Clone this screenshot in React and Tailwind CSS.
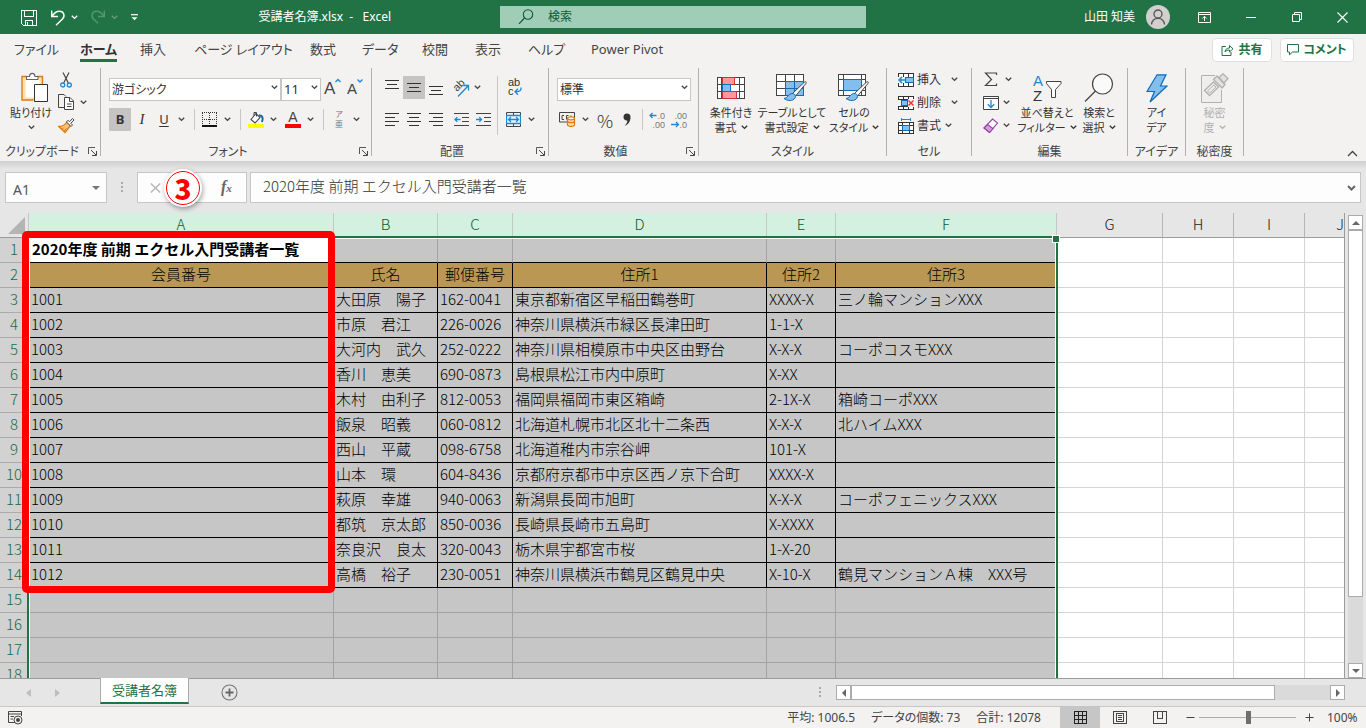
import React from "react";

const uiFont = "font-['Noto_Sans','Noto_Sans_CJK_JP',sans-serif] [font-feature-settings:'palt']";

function Chevron({ className = "text-[#444]" }) {
  return (
    <svg width="7" height="5" viewBox="0 0 7 5" className={"shrink-0 " + className} aria-hidden="true">
      <path d="M0.8 0.8 3.5 3.4 6.2 0.8" fill="none" stroke="currentColor" strokeWidth="1.4" />
    </svg>
  );
}

function Svg({ w, h, children, crisp }) {
  return (
    <svg
      width={w}
      height={h}
      viewBox={`0 0 ${w} ${h}`}
      fill="none"
      className="shrink-0"
      shapeRendering={crisp ? "crispEdges" : "auto"}
      aria-hidden="true"
    >
      {children}
    </svg>
  );
}

function Tool({ label, className, children }) {
  return (
    <button type="button" aria-label={label} className={"flex h-[23px] shrink-0 items-center justify-center " + className}>
      {children}
    </button>
  );
}

function Sep({ className }) {
  return (
    <span className={"flex h-[21px] shrink-0 justify-center " + className}>
      <span className="w-px bg-[#c8c6c4]" />
    </span>
  );
}

function Launcher({ label }) {
  return (
    <button type="button" aria-label={label} className="absolute right-0.5 bottom-0 flex h-[10px] w-[12px] items-center justify-center">
      <Svg w={9} h={9}>
        <path d="M0.5 7V0.5H7" stroke="#555" />
        <path d="M3 3 8 8M8.5 4V8.5H4" stroke="#444" />
      </Svg>
    </button>
  );
}

function Group({ name, width, launcher, children }) {
  return (
    <section aria-label={name} className={"relative flex h-[88px] shrink-0 flex-col border-r border-[#b3b1af] " + width}>
      <div className="h-20">{children}</div>
      <div className={"flex h-2 w-full items-center justify-center text-xs whitespace-nowrap text-[#444] " + (launcher ? "pr-4" : "")}>
        {name}
      </div>
      {launcher && <Launcher label={name + "の設定"} />}
    </section>
  );
}

function BigButton({ icon, lines, width, arrow, className = "text-[#333]" }) {
  return (
    <button type="button" className={"flex shrink-0 flex-col items-center text-[11px] leading-[15px] whitespace-nowrap " + width + " " + className}>
      <span className="flex h-9 items-center pt-1">{icon}</span>
      <span className="pt-px">{lines[0]}</span>
      <span className="flex items-center gap-1">
        {lines[1]}
        {arrow && <Chevron className="text-current" />}
      </span>
    </button>
  );
}

function Combo({ label, options, width, className = "" }) {
  return (
    <div className={"relative h-[23px] shrink-0 " + width}>
      <select aria-label={label} className={"h-full w-full appearance-none rounded-none border border-[#c8c6c4] bg-white pl-[2px] leading-[21px] text-[#333] outline-none " + className}>
        {options.map((o) => (
          <option key={o}>{o}</option>
        ))}
      </select>
      <span className="pointer-events-none absolute inset-y-0 right-[3px] flex items-center">
        <Chevron />
      </span>
    </div>
  );
}

/* ---------- title bar ---------- */

function TitleBar() {
  return (
    <header className="grid h-[34px] shrink-0 grid-cols-[1fr_366px_1fr] items-center bg-[#217346] text-white">
      <div className="flex items-center pl-5">
        <button type="button" aria-label="上書き保存" className="w-[18px]">
          <Svg w={17} h={17} crisp>
            <path d="M1 1H16V16H3L1 14Z" stroke="#fff" />
            <path d="M4 1V7H13V1M5 16V11H12V16M7.500 13V16" stroke="#fff" />
          </Svg>
        </button>
        <button type="button" aria-label="元に戻す" className="ml-3 flex items-center gap-1">
          <Svg w={17} h={17}>
            <path d="M1.700 1.500V7.500H8M2 7.200C4 4 6.500 2.200 9.500 2.200C13.800 2.200 15.500 7 12.500 10L6 16.300" stroke="#fff" strokeWidth="1.400" />
          </Svg>
          <Chevron className="text-white" />
        </button>
        <button type="button" aria-label="やり直し" className="ml-3 flex items-center gap-1 opacity-30">
          <Svg w={17} h={17}>
            <path d="M14.300 1.500V7.500H8M14 7.200C12 4 9.500 2.200 6.500 2.200C2.200 2.200 0.500 7 3.500 10L8 14.300" stroke="#cfe8da" strokeWidth="1.400" />
          </Svg>
          <Chevron className="text-white" />
        </button>
        <button type="button" aria-label="クイック アクセスのカスタマイズ" className="ml-3">
          <Svg w={9} h={7}>
            <path d="M1 0.700H8" stroke="#fff" strokeWidth="1.200" />
            <path d="M1.500 3.300H7.500L4.500 6.300Z" fill="#fff" />
          </Svg>
        </button>
        <h1 className="mr-[109px] ml-auto text-xs whitespace-pre">受講者名簿.xlsx&nbsp; -&nbsp;&nbsp; Excel</h1>
      </div>
      <label className="flex h-[22px] items-center bg-[#a0cdb5] pl-[18px]">
        <Svg w={16} h={16}>
          <circle cx="10" cy="5.500" r="4.700" stroke="#0f5a33" strokeWidth="1.100" />
          <path d="M6.500 9 1 14.800" stroke="#0f5a33" strokeWidth="1.200" />
        </Svg>
        <input aria-label="検索" placeholder="検索" className="ml-3.5 min-w-0 flex-1 bg-transparent text-xs text-[#0f5a33] outline-none placeholder:text-[#0f5a33]" />
      </label>
      <div className="flex items-center justify-end">
        <span className="mr-[11px] text-xs whitespace-nowrap">山田 知美</span>
        <button type="button" aria-label="アカウント" className="mr-[23px] flex size-6 items-center justify-center rounded-full bg-[#d2d0ce]">
          <Svg w={16} h={16}>
            <circle cx="8" cy="5" r="4" stroke="#555" strokeWidth="1.300" />
            <path d="M1.500 15.500C2 11 5 9.300 8 9.300S14 11 14.500 15.500" stroke="#555" strokeWidth="1.300" />
          </Svg>
        </button>
        <button type="button" aria-label="リボンの表示オプション" className="flex w-[23px] justify-center">
          <Svg w={13} h={11}>
            <path d="M0.500 0.500H12.500V10.500H0.500ZM0.500 2.500H12.500" stroke="#fff" />
            <path d="M6.500 9V4.500M4.300 6.500 6.500 4.300 8.700 6.500" stroke="#fff" />
          </Svg>
        </button>
        <button type="button" aria-label="最小化" className="flex w-[70px] justify-center">
          <Svg w={10} h={10}><path d="M0 5.500H10" stroke="#fff" /></Svg>
        </button>
        <button type="button" aria-label="元のサイズに戻す" className="flex w-[22px] justify-center">
          <Svg w={10} h={10}>
            <path d="M0.500 2.500H7.500V9.500H0.500ZM2.500 2.500V0.500H9.500V7.500H7.500" stroke="#fff" />
          </Svg>
        </button>
        <button type="button" aria-label="閉じる" className="flex w-[58px] justify-end pr-[18px]">
          <Svg w={11} h={11}><path d="M0.500 0.500 10.500 10.500M10.500 0.500 0.500 10.500" stroke="#fff" strokeWidth="1.100" /></Svg>
        </button>
      </div>
    </header>
  );
}

/* ---------- ribbon tabs ---------- */

const tabs = [
  ["ファイル", "w-[66px]"],
  ["ホーム", "w-[60px]"],
  ["挿入", "w-[54px]"],
  ["ページ レイアウト", "w-[116px]"],
  ["数式", "w-[52px]"],
  ["データ", "w-[60px]"],
  ["校閲", "w-[53px]"],
  ["表示", "w-[53px]"],
  ["ヘルプ", "w-[63px]"],
  ["Power Pivot", "w-[90px]"],
];

function RibbonTabs() {
  return (
    <nav className="flex h-8 shrink-0 items-center pl-3.5 text-[13px] text-[#444]">
      {tabs.map(([name, width]) => (
        <button key={name} type="button" className={"shrink-0 pt-0.5 text-left whitespace-nowrap " + width}>
          {name === "ホーム" ? (
            <span className="inline-block border-b-[3px] border-[#217346] font-bold text-[#333]">{name}</span>
          ) : (
            <span className="inline-block border-b-[3px] border-transparent">{name}</span>
          )}
        </button>
      ))}
      <button type="button" className="ml-auto flex h-6 w-[60px] shrink-0 items-center justify-center gap-1 rounded-sm border border-[#e1dfdd] bg-white text-xs font-bold text-[#217346]">
        <Svg w={13} h={12}>
          <path d="M5 2.500H1V11.500H10V8" stroke="#217346" />
          <path d="M4 8C4.500 5 6 4 8.500 4V1.500L12 4.800 8.500 8V6C6.500 6 5 6.500 4 8Z" stroke="#217346" />
        </Svg>
        共有
      </button>
      <button type="button" className="mr-3 ml-2 flex h-6 w-[74px] shrink-0 items-center justify-center gap-1 rounded-sm border border-[#e1dfdd] bg-white text-xs font-bold whitespace-nowrap text-[#217346]">
        <Svg w={12} h={12}>
          <path d="M0.500 0.500H11.500V8H5.500L2.500 10.800V8H0.500Z" stroke="#217346" />
        </Svg>
        コメント
      </button>
    </nav>
  );
}

/* ---------- ribbon icons ---------- */

const PasteIcon = () => (
  <Svg w={28} h={30}>
    <path d="M3 5.500H20V27H3Z" fill="#fff" stroke="#fbe0a8" strokeWidth="3" />
    <path d="M12.500 28H1V4.500H6M16 4.500H21.500V12" stroke="#e07b12" strokeWidth="1.400" />
    <path d="M5.500 7.500V4.500H8.500C8.500 0.300 14 0.300 14 4.500H17V7.500Z" fill="#fff" stroke="#666" strokeWidth="1.100" />
    <path d="M13.500 12.500H26.500V29.500H13.500Z" fill="#fff" stroke="#333" />
  </Svg>
);
const CutIcon = () => (
  <Svg w={12} h={16}>
    <path d="M3 0.500 8.300 11M9 0.500 3.700 11" stroke="#444" strokeWidth="1.200" />
    <circle cx="2.700" cy="13" r="2" stroke="#1e88d2" strokeWidth="1.300" />
    <circle cx="9.300" cy="13" r="2" stroke="#1e88d2" strokeWidth="1.300" />
  </Svg>
);
const CopyIcon = () => (
  <Svg w={17} h={17}>
    <path d="M6 13.500H0.500V0.500H6L8 2.500" stroke="#444" />
    <path d="M6.500 3.500H12L15.500 7V15.500H6.500Z" fill="#fff" stroke="#444" />
    <path d="M11.500 3.500V7.500H15.500M9 10H13.500M9 12.500H13.500" stroke="#444" />
  </Svg>
);
const BrushIcon = () => (
  <Svg w={17} h={16}>
    <path d="M9 4 12.500 7.500 7 14.500 0.800 8.500C4 8.500 7 7 9 4Z" fill="#f7c27a" stroke="#e07b12" strokeWidth="1.300" />
    <path d="M4 11.500 6 9.500M6 13 8.500 10.500" stroke="#e07b12" />
    <path d="M8.500 4 13 8.500 14.500 7 12.800 5.300 16 2 14.500 0.500 11.500 3.800 10 2.300Z" fill="#fff" stroke="#444" />
  </Svg>
);
const GrowFontIcon = () => (
  <Svg w={18} h={19}>
    <text x="0" y="16" fontSize="17" fill="#444" fontFamily="Liberation Sans">A</text>
    <path d="M11.500 4 14 1.500 16.500 4" stroke="#1e88d2" strokeWidth="1.300" />
  </Svg>
);
const ShrinkFontIcon = () => (
  <Svg w={17} h={19}>
    <text x="0" y="16" fontSize="15" fill="#444" fontFamily="Liberation Sans">A</text>
    <path d="M10.500 1.500 13 4 15.500 1.500" stroke="#1e88d2" strokeWidth="1.300" />
  </Svg>
);
const Lines = ({ rows, h = 13 }) => (
  <Svg w={14} h={h} crisp>
    {rows.map(([x1, x2, y]) => (
      <path key={y} d={`M${x1} ${y + 0.5}H${x2}`} stroke="#333" />
    ))}
  </Svg>
);
const Indent = ({ out }) => (
  <Svg w={15} h={13}>
    <path d="M0 0.500H15M8 4.500H15M8 8.500H15M0 12.500H15" stroke="#444" shapeRendering="crispEdges" />
    {out ? (
      <path d="M6.500 6.500H1M3.200 4.300 1 6.500 3.200 8.700" stroke="#1e88d2" strokeWidth="1.300" />
    ) : (
      <path d="M0 6.500H5.500M3.300 4.300 5.500 6.500 3.300 8.700" stroke="#1e88d2" strokeWidth="1.300" />
    )}
  </Svg>
);
const OrientIcon = () => (
  <Svg w={20} h={20}>
    <text x="0" y="0" fontSize="11" fill="#444" fontFamily="Liberation Sans" transform="translate(7 14) rotate(-45)">ab</text>
    <path d="M8 18.500 18 8M13.500 7.500H18.500V12.500" stroke="#1e88d2" strokeWidth="1.300" />
  </Svg>
);
const WrapIcon = () => (
  <Svg w={16} h={22}>
    <text x="1" y="9" fontSize="11" fill="#333" fontFamily="Liberation Sans">ab</text>
    <text x="1" y="18" fontSize="11" fill="#333" fontFamily="Liberation Sans">c</text>
    <path d="M14 10.500V12C14 14 12.500 14.800 8 14.800M11 11.800 8 14.800 11 17.800" stroke="#1e88d2" strokeWidth="1.300" />
  </Svg>
);
const MergeIcon = () => (
  <Svg w={15} h={15}>
    <path d="M0.500 0.500H14.500V14.500H0.500ZM7.500 0.500V3M7.500 12V14.500" stroke="#444" />
    <path d="M0.500 3.500H14.500V11.500H0.500Z" fill="#eef6fd" stroke="#1e88d2" strokeWidth="1.300" />
    <path d="M2.500 7.500H12.500M5 5 2.500 7.500 5 10M10 5 12.500 7.500 10 10" stroke="#1e88d2" strokeWidth="1.300" />
  </Svg>
);
const BorderIcon = () => (
  <Svg w={15} h={15} crisp>
    <path d="M0 0.500H15M0.500 1V14M14.500 1V14M7.500 1V14M0 7.500H15" stroke="#333" strokeDasharray="1 1" />
    <path d="M0 14H15" stroke="#111" strokeWidth="2" />
  </Svg>
);
const FillIcon = () => (
  <Svg w={17} h={18}>
    <path d="M3 8.500 8 2.500 12 6.500 7 12Z" fill="#fff" stroke="#444" strokeWidth="1.100" />
    <path d="M6 5V1.500H8.500V5.500" stroke="#444" />
    <path d="M11 4.500C14.500 4 15.500 7 14 11" stroke="#1565a8" strokeWidth="2" />
    <path d="M0 13H16V17H0Z" fill="#ff0" />
  </Svg>
);
const FontColorIcon = () => (
  <Svg w={16} h={18}>
    <text x="8" y="11" fontSize="14" textAnchor="middle" fill="#444" fontFamily="Liberation Sans">A</text>
    <path d="M0 13H16V17H0Z" fill="#f00" />
  </Svg>
);
const PhoneticIcon = () => (
  <Svg w={12} h={23}>
    <text x="6" y="9" fontSize="8" textAnchor="middle" fill="#777" fontFamily="Noto Sans CJK JP">ア</text>
    <text x="6" y="19" fontSize="8" textAnchor="middle" fill="#777" fontFamily="Noto Sans CJK JP">亜</text>
  </Svg>
);
const CurrencyIcon = () => (
  <Svg w={17} h={15}>
    <path d="M0.500 0.500H15.500V10H0.500Z" stroke="#444" />
    <path d="M5 3.500H3V7.500H5M9.500 3.500H7.500V7.500M12 3.500V5" stroke="#444" />
    <path d="M8.500 6.500V12.800C8.500 14.800 15.500 14.800 15.500 12.800V6.500Z" fill="#fbe0a8" stroke="#e07b12" strokeWidth="1.200" />
    <ellipse cx="12" cy="6.300" rx="3.500" ry="1.500" fill="#fff" stroke="#e07b12" strokeWidth="1.200" />
    <path d="M8.500 9.500C9 11 15 11 15.500 9.500" stroke="#e07b12" strokeWidth="1.200" />
  </Svg>
);
const DecimalIcon = ({ more }) => (
  <Svg w={16} h={20}>
    <text x="16" y="9" fontSize="9" textAnchor="end" fill="#777" fontFamily="Liberation Sans">{more ? ".0" : ".00"}</text>
    <text x="16" y="18" fontSize="9" textAnchor="end" fill="#777" fontFamily="Liberation Sans">{more ? ".00" : ".0"}</text>
    {more ? (
      <path d="M7.500 5.500H1M3.500 3 1 5.500 3.500 8" stroke="#1e88d2" strokeWidth="1.300" />
    ) : (
      <path d="M0 14.500H7.500M5 12 7.500 14.500 5 17" stroke="#1e88d2" strokeWidth="1.300" />
    )}
  </Svg>
);
const GridBase = () => (
  <path d="M0.500 0.500H27.500V21.500H0.500ZM0.500 7.500H27.500M0.500 14.500H27.500M9.500 0.500V21.500M18.500 0.500V21.500" fill="#fff" stroke="#444" shapeRendering="crispEdges" />
);
const PaintBrush = () => (
  <>
    <path d="M28 8.500C30 7 31 8 29.500 10L19.500 22 16.500 19.500Z" fill="#fff" stroke="#444" />
    <path d="M16 19.500C18.500 19.500 20.500 21.500 19 24C17 27 12 27.500 8 24.500C12 24.500 11.500 20 16 19.500Z" fill="#83beec" stroke="#0f6cbd" />
  </>
);
const CondIcon = () => (
  <Svg w={28} h={28}>
    <g shapeRendering="crispEdges">
      <path d="M0.500 3.500H27.500V24.500H0.500ZM0.500 10.500H27.500M0.500 17.500H27.500M4.500 3.500V24.500M22.500 3.500V24.500" fill="#fff" stroke="#444" />
      <path d="M5.500 3.500H17.500V10.500H5.500ZM5.500 17.500H19.500V24.500H5.500Z" fill="#f99" stroke="#d13438" />
      <path d="M5.500 10.500H13.500V17.500H5.500Z" fill="#83beec" stroke="#0f6cbd" />
    </g>
  </Svg>
);
const TableStyleIcon = () => (
  <Svg w={32} h={28}>
    <GridBase />
    <path d="M9.500 7.500H27.500V21.500H9.500ZM18.500 7.500V21.500M9.500 14.500H27.500" fill="#83beec" stroke="#0f6cbd" shapeRendering="crispEdges" />
    <PaintBrush />
  </Svg>
);
const CellStyleIcon = () => (
  <Svg w={32} h={28}>
    <path d="M0.500 0.500H27.500V21.500H0.500ZM0.500 5.500H27.500M0.500 16.500H27.500M5.500 0.500V21.500M23.500 0.500V21.500" fill="#fff" stroke="#444" shapeRendering="crispEdges" />
    <path d="M5.500 5.500H23.500V16.500H5.500Z" fill="#83beec" stroke="#0f6cbd" shapeRendering="crispEdges" />
    <PaintBrush />
  </Svg>
);
const InsertIcon = () => (
  <Svg w={16} h={14}>
    <path d="M0.500 0.500H15.500V13.500H0.500ZM5.500 0.500V13.500M10.500 0.500V13.500M0.500 4.500H15.500M0.500 9.500H15.500" fill="#fff" stroke="#333" shapeRendering="crispEdges" />
    <path d="M7.500 4.500H15.500V9.500H7.500Z" fill="#83beec" stroke="#0f6cbd" shapeRendering="crispEdges" />
    <path d="M0 4H7V10H0Z" fill="#f3f2f1" />
    <path d="M8 7H1M4 4 1 7 4 10" stroke="#1e88d2" strokeWidth="1.500" />
  </Svg>
);
const DeleteIcon = () => (
  <Svg w={16} h={14}>
    <path d="M0.500 0.500H15.500V3.500H0.500ZM0.500 10.500H15.500V13.500H0.500ZM5.500 0.500V3.500M10.500 0.500V3.500M5.500 10.500V13.500M10.500 10.500V13.500" fill="#fff" stroke="#333" shapeRendering="crispEdges" />
    <path d="M0.500 3.500H3.500V10.500" stroke="#333" shapeRendering="crispEdges" />
    <path d="M3.500 4.500H9.500V9.500H3.500Z" fill="#83beec" stroke="#0f6cbd" shapeRendering="crispEdges" />
    <path d="M10 3H16V11H10Z" fill="#f3f2f1" />
    <path d="M10.500 4.500 15.500 9.500M15.500 4.500 10.500 9.500" stroke="#e8383d" strokeWidth="1.500" />
  </Svg>
);
const FormatIcon = () => (
  <Svg w={16} h={16}>
    <path d="M0.500 4.500H15.500V15.500H0.500ZM4.500 4.500V15.500M11.500 4.500V15.500M0.500 7.500H15.500M0.500 12.500H15.500" fill="#fff" stroke="#333" shapeRendering="crispEdges" />
    <path d="M4.500 7.500H11.500V12.500H4.500Z" fill="#83beec" stroke="#0f6cbd" shapeRendering="crispEdges" />
    <path d="M3 1.500H13M3.500 0V3M12.500 0V3" stroke="#1e88d2" shapeRendering="crispEdges" />
  </Svg>
);
const SigmaIcon = () => (
  <Svg w={14} h={15}>
    <path d="M12.500 3V1H1.500L7.500 7.500 1.500 13.500H12.500V11.500" stroke="#444" strokeWidth="1.200" />
  </Svg>
);
const DownFillIcon = () => (
  <Svg w={16} h={14}>
    <path d="M0.500 0.500H15.500V13.500H0.500ZM0.500 2.500H15.500" fill="#fff" stroke="#444" />
    <path d="M8 4V11.500M4.800 8.300 8 11.500 11.200 8.300" stroke="#1e88d2" strokeWidth="1.300" />
  </Svg>
);
const EraserIcon = () => (
  <Svg w={16} h={16}>
    <path d="M9.500 1 14.500 5 6.500 14.500 1 10Z" fill="#fff" stroke="#9b3fa5" strokeWidth="1.100" />
    <path d="M4.500 6.500 10 10.500 6.500 14.500 1 10Z" fill="#d59ddb" stroke="#9b3fa5" strokeWidth="1.100" />
  </Svg>
);
const SortIcon = () => (
  <Svg w={29} h={32}>
    <text x="0" y="14" fontSize="15" fill="#1e88d2" fontFamily="Liberation Sans">A</text>
    <text x="0" y="29" fontSize="15" fill="#333" fontFamily="Liberation Sans">Z</text>
    <path d="M13.500 9.500H28V11.500L22.500 17.500V25.500H18.500V17.500L13.500 11.500Z" fill="#fff" stroke="#444" />
  </Svg>
);
const FindIcon = () => (
  <Svg w={30} h={30}>
    <circle cx="18.500" cy="11" r="10" fill="#fafafa" stroke="#444" strokeWidth="1.200" />
    <path d="M11.500 18 1 28.500" stroke="#444" strokeWidth="1.300" />
  </Svg>
);
const BoltIcon = () => (
  <Svg w={22} h={29}>
    <path d="M11 0.800H20L14.500 12H21L4 28 8.500 17.500H1Z" fill="#83beec" stroke="#0f6cbd" strokeWidth="1.200" />
  </Svg>
);
const SensitivityIcon = () => (
  <Svg w={28} h={30}>
    <path d="M14 2.500H0.500V29.500H20.500V17" fill="#efeeed" stroke="#b1b1b1" />
    <path d="M3.500 17.500 12.500 9 17.500 14 8.500 22.500Z" fill="#efeeed" stroke="#b1b1b1" strokeWidth="1.300" />
    <path d="M6.500 18 13 12 15 14 8.500 20Z" stroke="#b1b1b1" />
    <path d="M12.500 6.500 16 3 24 11.500 21 15Z" fill="#e1e1e1" stroke="#b1b1b1" strokeWidth="1.300" />
    <path d="M18 4.500 22 0.800 27 5.500 23 10Z" fill="#e1e1e1" stroke="#b1b1b1" strokeWidth="1.300" />
  </Svg>
);

/* ---------- ribbon ---------- */

function CellRow({ icon, text, gap }) {
  return (
    <button type="button" className="flex h-[23px] items-center text-xs text-[#333]">
      <span className="flex w-[19px] items-center">{icon}</span>
      <span>{text}</span>
      <span className={gap}>
        <Chevron />
      </span>
    </button>
  );
}

function EditRow({ icon, label, gap }) {
  return (
    <button type="button" aria-label={label} className="flex h-[23px] items-center">
      <span className="flex w-4 items-center justify-center">{icon}</span>
      <span className={gap}>
        <Chevron />
      </span>
    </button>
  );
}

function Ribbon() {
  return (
    <div className="flex h-[95px] shrink-0 pt-0.5 text-[#333]">
      <Group name="クリップボード" width="w-[101px]" launcher>
        <div className="flex pl-2">
          <button type="button" className="flex w-[46px] flex-col items-center text-[11px] whitespace-nowrap">
            <span className="flex h-[37px] items-center pl-2">
              <PasteIcon />
            </span>
            <span className="leading-[15px]">貼り付け</span>
            <span className="flex h-[14px] items-center">
              <Chevron />
            </span>
          </button>
          <div className="ml-[3px] flex flex-col">
            <Tool label="切り取り" className="w-[17px]"><CutIcon /></Tool>
            <Tool label="コピー" className="w-[30px] gap-[5px]">
              <CopyIcon />
              <Chevron />
            </Tool>
            <Tool label="書式のコピー/貼り付け" className="w-[18px]"><BrushIcon /></Tool>
          </div>
        </div>
      </Group>

      <Group name="フォント" width="w-[271px]" launcher>
        <div className="flex flex-col gap-[9px] pt-2 pl-2">
          <div className="flex items-center">
            <Combo label="フォント" options={["游ゴシック"]} width="w-[172px]" className="text-xs" />
            <Combo label="フォント サイズ" options={["11"]} width="w-[40px]" className="text-[13px]" />
            <Tool label="フォント サイズの拡大" className="ml-[3px] w-[18px]"><GrowFontIcon /></Tool>
            <Tool label="フォント サイズの縮小" className="ml-1 w-[18px]"><ShrinkFontIcon /></Tool>
          </div>
          <div className="flex items-center">
            <Tool label="太字" className="w-[22px] bg-[#c6c4c2] text-[13px] font-bold">B</Tool>
            <Tool label="斜体" className="w-[22px] font-['Liberation_Serif',serif] text-[15px] italic">I</Tool>
            <Tool label="下線" className="w-[22px] text-[13px] underline underline-offset-2">U</Tool>
            <Tool label="下線の種類" className="w-[12px]"><Chevron /></Tool>
            <Sep className="w-[14px]" />
            <Tool label="罫線" className="w-4"><BorderIcon /></Tool>
            <Tool label="罫線の種類" className="w-5"><Chevron /></Tool>
            <Sep className="w-1.5" />
            <Tool label="塗りつぶしの色" className="w-[26px]"><FillIcon /></Tool>
            <Tool label="塗りつぶしの色の選択" className="w-2"><Chevron /></Tool>
            <Tool label="フォントの色" className="ml-1 w-6"><FontColorIcon /></Tool>
            <Tool label="フォントの色の選択" className="w-2.5"><Chevron /></Tool>
            <Sep className="w-4" />
            <Tool label="ふりがなの表示" className="w-4"><PhoneticIcon /></Tool>
            <Tool label="ふりがなの設定" className="w-[18px]"><Chevron /></Tool>
          </div>
        </div>
      </Group>

      <Group name="配置" width="w-[177px]" launcher>
        <div className="flex pt-2 pl-[9px]">
          <div className="flex flex-col gap-[9px]">
            <div className="flex">
              <Tool label="上揃え" className="w-[22px] pb-1.5"><Lines h={9} rows={[[0, 14, 0], [2, 12, 4], [0, 14, 8]]} /></Tool>
              <Tool label="上下中央揃え" className="w-[22px] bg-[#c6c4c2]"><Lines h={9} rows={[[0, 14, 0], [2, 12, 4], [0, 14, 8]]} /></Tool>
              <Tool label="下揃え" className="w-[22px] pt-1.5"><Lines h={9} rows={[[0, 14, 0], [2, 12, 4], [0, 14, 8]]} /></Tool>
              <Tool label="方向" className="w-9 gap-1">
                <OrientIcon />
                <Chevron />
              </Tool>
            </div>
            <div className="flex">
              <Tool label="左揃え" className="w-[22px]"><Lines rows={[[0, 14, 0], [0, 10, 4], [0, 14, 8], [0, 10, 12]]} /></Tool>
              <Tool label="中央揃え" className="w-[22px]"><Lines rows={[[0, 14, 0], [2, 12, 4], [0, 14, 8], [2, 12, 12]]} /></Tool>
              <Tool label="右揃え" className="w-[22px]"><Lines rows={[[0, 14, 0], [4, 14, 4], [0, 14, 8], [4, 14, 12]]} /></Tool>
              <Tool label="インデントを減らす" className="ml-[3px] w-[22px]"><Indent out /></Tool>
              <Tool label="インデントを増やす" className="w-[22px]"><Indent /></Tool>
            </div>
          </div>
          <span className="ml-[3px] h-[59px] w-px bg-[#c8c6c4]" />
          <div className="flex flex-col gap-[9px] pl-[7px]">
            <Tool label="折り返して全体を表示する" className="w-5"><WrapIcon /></Tool>
            <Tool label="セルを結合して中央揃え" className="w-[31px] gap-[7px]">
              <MergeIcon />
              <Chevron />
            </Tool>
          </div>
        </div>
      </Group>

      <Group name="数値" width="w-[150px]" launcher>
        <div className="flex flex-col gap-[9px] pt-2 pl-2">
          <Combo label="表示形式" options={["標準"]} width="w-[134px]" className="text-xs" />
          <div className="flex items-center">
            <Tool label="通貨表示形式" className="w-[34px] gap-1.5">
              <CurrencyIcon />
              <Chevron />
            </Tool>
            <Tool label="パーセント スタイル" className="ml-[3px] w-[22px] font-['Noto_Sans_CJK_JP',sans-serif] text-lg font-light">%</Tool>
            <Tool label="桁区切りスタイル" className="w-[22px]">
              <Svg w={8} h={13}>
                <path d="M0.500 4A3.500 3.500 0 0 1 7.500 4C7.500 8 5.500 11.500 1.500 12.800C3.500 11 4.300 9.500 4.300 7.500C2 7.800 0.500 6.300 0.500 4Z" fill="#333" />
              </Svg>
            </Tool>
            <Sep className="w-2" />
            <Tool label="小数点以下の表示桁数を増やす" className="w-[22px]"><DecimalIcon more /></Tool>
            <Tool label="小数点以下の表示桁数を減らす" className="w-[22px]"><DecimalIcon /></Tool>
          </div>
        </div>
      </Group>

      <Group name="スタイル" width="w-[188px]">
        <div className="flex pl-[7px]">
          <BigButton icon={<CondIcon />} lines={["条件付き", "書式"]} width="w-[50px]" arrow />
          <BigButton icon={<TableStyleIcon />} lines={["テーブルとして", "書式設定"]} width="w-[72px]" arrow />
          <BigButton icon={<CellStyleIcon />} lines={["セルの", "スタイル"]} width="w-[52px]" arrow />
        </div>
      </Group>

      <Group name="セル" width="w-[85px]">
        <div className="flex flex-col pl-[11px]">
          <CellRow icon={<InsertIcon />} text="挿入" gap="pl-[10px]" />
          <CellRow icon={<DeleteIcon />} text="削除" gap="pl-[10px]" />
          <CellRow icon={<FormatIcon />} text="書式" gap="pl-1" />
        </div>
      </Group>

      <Group name="編集" width="w-[156px]">
        <div className="flex pl-[11px]">
          <div className="flex w-[30px] flex-col">
            <EditRow icon={<SigmaIcon />} label="オート SUM" gap="pl-1.5" />
            <EditRow icon={<DownFillIcon />} label="フィル" gap="pl-1" />
            <EditRow icon={<EraserIcon />} label="クリア" gap="pl-1" />
          </div>
          <BigButton icon={<SortIcon />} lines={["並べ替えと", "フィルター"]} width="ml-1 w-[60px]" arrow />
          <BigButton icon={<FindIcon />} lines={["検索と", "選択"]} width="w-[44px]" arrow />
        </div>
      </Group>

      <Group name="アイデア" width="w-[58px]">
        <BigButton icon={<BoltIcon />} lines={["アイ", "デア"]} width="w-full" />
      </Group>

      <Group name="秘密度" width="w-[58px]">
        <BigButton icon={<SensitivityIcon />} lines={["秘密", "度"]} width="w-full" arrow className="text-[#b1b1b1]" />
      </Group>

      <button type="button" aria-label="リボンを折りたたむ" className="mr-2 ml-auto flex items-end pb-1">
        <Svg w={11} h={7}>
          <path d="M1 6 5.500 1.500 10 6" stroke="#444" strokeWidth="1.300" />
        </Svg>
      </button>
    </div>
  );
}

/* ---------- formula bar ---------- */

function FormulaBar() {
  return (
    <div className="flex h-[52px] shrink-0 bg-[linear-gradient(#cfcfcf,#e6e6e6_8px)] pt-[11px] pr-[5px] pb-2.5 pl-[5px]">
      <div className="flex w-[102px] shrink-0 items-center border border-[#c6c6c6] bg-[#fdfdfd] pr-1.5 pl-[7px]">
        <input aria-label="名前ボックス" defaultValue="A1" className="min-w-0 flex-1 bg-transparent pt-1 text-sm text-[#555] outline-none" />
        <Svg w={8} h={4}><path d="M0 0H8L4 4Z" fill="#777" /></Svg>
      </div>
      <div className="flex w-[30px] shrink-0 items-center justify-center">
        <Svg w={2} h={11} crisp><path d="M1 0V2M1 4V6M1 8V10" stroke="#aaa" strokeWidth="2" /></Svg>
      </div>
      <div className="relative flex w-[110px] shrink-0 items-center border border-[#c6c6c6] bg-[#fdfdfd]">
        <button type="button" aria-label="キャンセル" className="flex w-9 justify-center">
          <Svg w={11} h={10}><path d="M0.800 0.500 10.200 9.500M10.200 0.500 0.800 9.500" stroke="#bbb" strokeWidth="1.600" /></Svg>
        </button>
        <button type="button" aria-label="入力" className="flex w-[22px] justify-center">
          <Svg w={11} h={10}><path d="M0.800 5 4 8.500 10.200 1" stroke="#bbb" strokeWidth="1.800" /></Svg>
        </button>
        <button type="button" aria-label="関数の挿入" className="ml-3 w-10 pb-0.5 text-center font-['Liberation_Serif',serif] text-base font-bold text-[#666] italic">
          f<span className="text-[11px]">x</span>
        </button>
        <div className="absolute -top-1 left-[26px] z-20 flex size-[38px] items-center justify-center rounded-full bg-white shadow-[1px_2px_5px_rgba(0,0,0,0.35)]">
          <div className="flex size-[34px] items-center justify-center rounded-full border border-[#f00]">
            <span className="font-['Noto_Sans_CJK_JP',sans-serif] text-[28px] leading-6 font-black text-[#f00]">3</span>
          </div>
        </div>
      </div>
      <div className="ml-[3px] flex min-w-0 flex-1 items-center border border-[#c6c6c6] bg-[#fdfdfd] pr-1 pl-3">
        <input
          aria-label="数式バー"
          defaultValue="2020年度 前期 エクセル入門受講者一覧"
          className="h-[25px] min-w-0 flex-1 self-start bg-transparent font-['Noto_Sans_CJK_JP',sans-serif] text-[15px] font-light text-[#333] outline-none [font-feature-settings:normal]"
        />
        <Svg w={9} h={6}><path d="M1 1 4.500 4.500 8 1" stroke="#666" strokeWidth="2" /></Svg>
      </div>
    </div>
  );
}

/* ---------- worksheet ---------- */

const columns = [
  ["A", "w-[305px]"],
  ["B", "w-[104px]"],
  ["C", "w-[75px]"],
  ["D", "w-[254px]"],
  ["E", "w-[69px]"],
  ["F", "w-[221px]"],
  ["G", "w-[106px]"],
  ["H", "w-[71px]"],
  ["I", "w-[71px]"],
  ["J", "w-[71px]"],
];

const data = [
  ["2020年度 前期 エクセル入門受講者一覧", "", "", "", "", ""],
  ["会員番号", "氏名", "郵便番号", "住所1", "住所2", "住所3"],
  ["1001", "大田原　陽子", "162-0041", "東京都新宿区早稲田鶴巻町", "XXXX-X", "三ノ輪マンションXXX"],
  ["1002", "市原　君江", "226-0026", "神奈川県横浜市緑区長津田町", "1-1-X", ""],
  ["1003", "大河内　武久", "252-0222", "神奈川県相模原市中央区由野台", "X-X-X", "コーポコスモXXX"],
  ["1004", "香川　恵美", "690-0873", "島根県松江市内中原町", "X-XX", ""],
  ["1005", "木村　由利子", "812-0053", "福岡県福岡市東区箱崎", "2-1X-X", "箱崎コーポXXX"],
  ["1006", "飯泉　昭義", "060-0812", "北海道札幌市北区北十二条西", "X-X-X", "北ハイムXXX"],
  ["1007", "西山　平蔵", "098-6758", "北海道稚内市宗谷岬", "101-X", ""],
  ["1008", "山本　環", "604-8436", "京都府京都市中京区西ノ京下合町", "XXXX-X", ""],
  ["1009", "萩原　幸雄", "940-0063", "新潟県長岡市旭町", "X-X-X", "コーポフェニックスXXX"],
  ["1010", "都筑　京太郎", "850-0036", "長崎県長崎市五島町", "X-XXXX", ""],
  ["1011", "奈良沢　良太", "320-0043", "栃木県宇都宮市桜", "1-X-20", ""],
  ["1012", "高橋　裕子", "230-0051", "神奈川県横浜市鶴見区鶴見中央", "X-10-X", "鶴見マンションＡ棟　XXX号"],
  [], [], [], [],
];

function cellClass(row, col) {
  const base = "h-[25px] overflow-visible border-r border-b p-0 align-top leading-[21px] whitespace-pre ";
  if (col > 5) return base + "border-[#d4d4d4] bg-white";
  if (row === 0) {
    return base + "border-r-[#a3a3a3] border-b-black pl-[3px] " + (col === 0 ? "bg-white font-bold" : "bg-[#c6c6c6]");
  }
  if (row === 1) return base + "border-black bg-[#ba9753] text-center";
  if (row < 14) return base + "border-black bg-[#c6c6c6] pl-[2px]";
  return base + "border-[#a3a3a3] bg-[#c6c6c6]";
}

function Sheet() {
  return (
    <div className="relative min-w-0 flex-1 overflow-hidden border-r border-[#9b9b9b] bg-white">
      <table className="w-[1376px] table-fixed border-separate border-spacing-0 font-['Noto_Sans_CJK_JP',sans-serif] text-[15px] font-light text-black [font-feature-settings:normal]">
        <thead>
          <tr>
            <th className="h-[25px] w-[29px] border-r border-b border-r-[#c6c6c6] border-b-[#9b9b9b] bg-[#e6e6e6] p-0">
              <span className="flex justify-end pr-[3px]">
                <Svg w={17} h={17}><path d="M17 0V17H0Z" fill="#b4b4b4" /></Svg>
              </span>
            </th>
            {columns.map(([name, width], i) => (
              <th
                key={name}
                scope="col"
                className={
                  "h-[25px] border-r border-b border-b-[#9b9b9b] p-0 align-top leading-[22px] font-light " +
                  width +
                  (i < 6 ? " border-r-[#c0c9c4] bg-[#d3f0e0] text-[#0f5a33]" : " border-r-[#b5b5b5] bg-[#e6e6e6] text-[#222]")
                }
              >
                {name}
              </th>
            ))}
          </tr>
        </thead>
        <tbody>
          {data.map((cells, r) => (
            <tr key={r}>
              <th scope="row" className="h-[25px] border-r border-b border-[#ababab] bg-[#d2d2d2] p-0 text-center align-top leading-[21px] font-light text-[#1d6b41]">
                {r + 1}
              </th>
              {columns.map(([name], c) => (
                <td key={name} className={cellClass(r, c)}>
                  {cells[c] || ""}
                </td>
              ))}
            </tr>
          ))}
        </tbody>
      </table>
      <div className="pointer-events-none absolute top-[23px] left-[27px] h-[2000px] w-[1031px] border-2 border-[#217346] shadow-[inset_0_0_0_1px_#fff]">
        <span className="absolute -top-0.5 -right-[3px] size-[6px] bg-[#217346] outline outline-white" />
      </div>
      <div className="pointer-events-none absolute top-[18px] left-[22px] h-[362px] w-[313px] rounded-[5px] border-[7px] border-[#f00]" />
    </div>
  );
}

const scrollButton = "flex size-[15px] shrink-0 items-center justify-center border border-[#ababab] bg-white";

function VerticalScroll() {
  return (
    <div className="flex w-[21px] shrink-0 flex-col bg-[#e6e6e6] px-[3px] pt-0.5">
      <button type="button" aria-label="上へスクロール" className={scrollButton}>
        <Svg w={8} h={4}><path d="M0 4H8L4 0Z" fill="#666" /></Svg>
      </button>
      <div className="flex min-h-0 flex-1 flex-col bg-[#dadada]">
        <div className="flex-[11] border border-[#ababab] bg-white" />
        <div className="flex-[2]" />
      </div>
      <button type="button" aria-label="下へスクロール" className={scrollButton}>
        <Svg w={8} h={4}><path d="M0 0H8L4 4Z" fill="#666" /></Svg>
      </button>
    </div>
  );
}

function SheetTabs() {
  return (
    <div className="flex h-7 shrink-0 border-t border-[#9b9b9b] bg-[#e6e6e6] pr-[21px]">
      <div className="flex w-[100px] shrink-0 items-center gap-6 pl-[26px]">
        <button type="button" aria-label="前のシート"><Svg w={5} h={8}><path d="M5 0V8L0 4Z" fill="#bdbdbd" /></Svg></button>
        <button type="button" aria-label="次のシート"><Svg w={5} h={8}><path d="M0 0V8L5 4Z" fill="#bdbdbd" /></Svg></button>
      </div>
      <button type="button" className="-mt-px h-[26px] w-[89px] shrink-0 border-x border-b-2 border-x-[#ababab] border-b-[#217346] bg-white text-[13px] leading-6 text-[#217346]">
        受講者名簿
      </button>
      <button type="button" aria-label="新しいシート" className="ml-8 flex items-center">
        <Svg w={17} h={17}>
          <circle cx="8.500" cy="8.500" r="7.500" stroke="#777" strokeWidth="1.100" />
          <path d="M4.500 8.500H12.500M8.500 4.500V12.500" stroke="#666" strokeWidth="1.800" />
        </Svg>
      </button>
      <div className="ml-auto flex w-[526px] items-center">
        <Svg w={2} h={11} crisp><path d="M1 0V2M1 4V6M1 8V10" stroke="#aaa" strokeWidth="2" /></Svg>
        <div className="ml-[15px] flex h-[15px] flex-1">
          <button type="button" aria-label="左へスクロール" className={scrollButton}>
            <Svg w={4} h={8}><path d="M4 0V8L0 4Z" fill="#666" /></Svg>
          </button>
          <div className="flex flex-1 bg-[#dadada]">
            <div className="flex-[23] border border-[#ababab] bg-white" />
            <div className="flex-[3]" />
          </div>
          <button type="button" aria-label="右へスクロール" className={scrollButton}>
            <Svg w={4} h={8}><path d="M0 0V8L4 4Z" fill="#666" /></Svg>
          </button>
        </div>
      </div>
    </div>
  );
}

function StatusBar() {
  return (
    <footer className="flex h-[22px] shrink-0 items-stretch border-t border-[#c6c6c6] bg-[#f3f2f1] text-xs whitespace-nowrap text-[#444]">
      <button type="button" aria-label="マクロの記録" className="ml-2 flex items-center">
        <Svg w={15} h={14}>
          <path d="M7 11.500H0.500V0.500H13.500V5M0.500 3H13.500M2.500 5.500H6M2.500 8H5" stroke="#444" />
          <circle cx="10" cy="9" r="4" fill="#f3f2f1" stroke="#444" />
          <circle cx="10" cy="9" r="2" fill="#444" />
        </Svg>
      </button>
      <div className="ml-auto flex items-center gap-4 pr-[19px]">
        <span>平均: 1006.5</span>
        <span>データの個数: 73</span>
        <span>合計: 12078</span>
      </div>
      <button type="button" aria-label="標準" className="flex w-10 items-center justify-center bg-[#c6c6c6]">
        <Svg w={13} h={13} crisp><path d="M0.500 0.500H12.500V12.500H0.500ZM4.500 0.500V12.500M8.500 0.500V12.500M0.500 4.500H12.500M0.500 8.500H12.500" stroke="#222" /></Svg>
      </button>
      <button type="button" aria-label="ページ レイアウト" className="flex w-10 items-center justify-center">
        <Svg w={14} h={13} crisp><path d="M0.500 0.500H13.500V12.500H0.500ZM3.500 2.500H10.500V10.500H3.500ZM5 4.500H9M5 6.500H9M5 8.500H9" stroke="#444" /></Svg>
      </button>
      <button type="button" aria-label="改ページ プレビュー" className="flex w-10 items-center justify-center">
        <Svg w={14} h={13} crisp><path d="M0.500 0.500H13.500V12.500H0.500ZM4.500 0.500V7.500H9.500V0.500" stroke="#444" /></Svg>
      </button>
      <button type="button" aria-label="縮小" className="ml-1 flex w-3 items-center justify-center">
        <Svg w={9} h={9}><path d="M0.500 4.500H8.500" stroke="#444" /></Svg>
      </button>
      <input
        type="range"
        aria-label="ズーム"
        min="0"
        max="100"
        defaultValue="51"
        className="mx-[3px] w-[97px] appearance-none bg-[linear-gradient(#ababab,#ababab)] bg-[length:100%_1px] bg-center bg-no-repeat [&::-webkit-slider-thumb]:h-[13px] [&::-webkit-slider-thumb]:w-[5px] [&::-webkit-slider-thumb]:appearance-none [&::-webkit-slider-thumb]:bg-[#6e6e6e]"
      />
      <button type="button" aria-label="拡大" className="ml-1 flex w-3 items-center justify-center">
        <Svg w={9} h={9}><path d="M0.500 4.500H8.500M4.500 0.500V8.500" stroke="#444" /></Svg>
      </button>
      <span className="flex w-[51px] items-center pl-3">100%</span>
    </footer>
  );
}

export default function App() {
  return (
    <div className={"flex h-screen flex-col overflow-hidden bg-[#f3f2f1] " + uiFont}>
      <TitleBar />
      <RibbonTabs />
      <Ribbon />
      <FormulaBar />
      <main className="flex min-h-0 flex-1">
        <Sheet />
        <VerticalScroll />
      </main>
      <SheetTabs />
      <StatusBar />
    </div>
  );
}
